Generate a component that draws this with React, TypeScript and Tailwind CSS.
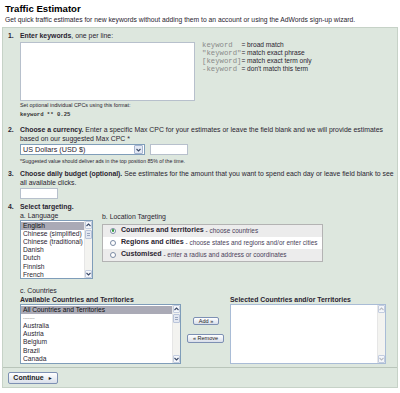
import React from "react";

const Chevron = ({ up, disabled }: { up?: boolean; disabled?: boolean }) => (
  <svg width="5" height="4" viewBox="0 0 5 4" className="block">
    <path
      d={up ? "M0.5 3 L2.5 1 L4.5 3" : "M0.5 1 L2.5 3 L4.5 1"}
      fill="none"
      stroke={disabled ? "#b8bcc4" : "#3b4a68"}
      strokeWidth="1.1"
    />
  </svg>
);

const ScrollBar = ({ disabled, thumb = true }: { disabled?: boolean; thumb?: boolean }) => (
  <div className="flex flex-col w-[8px] h-full bg-[#f3f3f0] border-l border-[#e6e6e6]">
    <div className="h-[8px] flex items-center justify-center bg-[#f5f7fb] border border-[#c3cde0] rounded-[1px]">
      <Chevron up disabled={disabled} />
    </div>
    {thumb && !disabled && (
      <div className="h-[9px] mt-px bg-[#e4e8f1] border border-[#b9c4da] rounded-[1px] flex flex-col items-center justify-center gap-[1px]">
        <div className="w-[3px] h-px bg-[#9aa6bf]" />
        <div className="w-[3px] h-px bg-[#9aa6bf]" />
      </div>
    )}
    <div className="flex-1" />
    <div className="h-[8px] flex items-center justify-center bg-[#f5f7fb] border border-[#c3cde0] rounded-[1px]">
      <Chevron disabled={disabled} />
    </div>
  </div>
);

const Num = ({ n }: { n: string }) => (
  <div className="w-[12px] shrink-0 font-bold">{n}</div>
);

const Btn = ({ children, className = "" }: { children: React.ReactNode; className?: string }) => (
  <div
    className={
      "flex items-center justify-center border border-[#7d90b3] rounded-[2px] bg-gradient-to-b from-white to-[#d9dfea] text-[#222] " +
      className
    }
  >
    {children}
  </div>
);

export default function App() {
  const languages = [
    "English",
    "Chinese (simplified)",
    "Chinese (traditional)",
    "Danish",
    "Dutch",
    "Finnish",
    "French",
  ];
  const countries = [
    "All Countries and Territories",
    "-------",
    "Australia",
    "Austria",
    "Belgium",
    "Brazil",
    "Canada",
  ];
  const mono = "font-['Liberation_Mono',monospace]";
  return (
    <div className="w-[400px] h-[393px] bg-white font-['Liberation_Sans',Arial,sans-serif] text-[#2a2430] overflow-hidden">
      <div className="pl-[5px] pt-[3px]">
        <div className="text-[9.6px] font-bold leading-[11px] text-black">Traffic Estimator</div>
        <div className="text-[6.75px] leading-[9px] mt-[1px]">
          Get quick traffic estimates for new keywords without adding them to an account or using the AdWords sign-up wizard.
        </div>
      </div>

      <div className="mx-[2px] mt-[3px] border border-[#c6d2c7] bg-[#dde7de] text-[6.9px] leading-[9.5px]">
        {/* Section 1 */}
        <div className="flex pl-[5px] pt-[3px]">
          <Num n="1." />
          <div className="flex flex-col">
            <div>
              <span className="font-bold">Enter keywords</span>, one per line:
            </div>
            <div className="flex mt-[1px]">
              <div className="w-[175px] h-[59px] bg-white border border-[#b7c0cc]" />
              <div className="ml-[7px] mt-[-1px] text-[6.6px] leading-[8.3px] whitespace-pre">
                <div><span className={mono + " text-[#8a8a8a] text-[7.3px]"}>keyword  </span>= broad match</div>
                <div><span className={mono + " text-[#8a8a8a] text-[7.3px]"}>"keyword"</span>= match exact phrase</div>
                <div><span className={mono + " text-[#8a8a8a] text-[7.3px]"}>[keyword]</span>= match exact term only</div>
                <div><span className={mono + " text-[#8a8a8a] text-[7.3px]"}>-keyword </span>= don't match this term</div>
              </div>
            </div>
            <div className="text-[5.4px] leading-[7px] mt-[1.5px]">Set optional individual CPCs using this format:</div>
            <div className={mono + " text-[5.6px] leading-[7px] mt-[1.5px] font-bold text-[#333] whitespace-pre"}>keyword ** 0.25</div>
          </div>
        </div>

        {/* Section 2 */}
        <div className="flex pl-[5px] pt-[7px] pr-[6px]">
          <Num n="2." />
          <div className="flex flex-col flex-1">
            <div>
              <span className="font-bold">Choose a currency.</span> Enter a specific Max CPC for your estimates or leave the field blank and we will provide estimates based on our suggested Max CPC *
            </div>
            <div className="flex mt-[0.5px] gap-[5px]">
              <div className="w-[125px] h-[11px] bg-white border border-[#7f9db9] flex items-center">
                <div className="flex-1 pl-[2px] text-[7.2px] leading-[9px]">US Dollars (USD $)</div>
                <div className="w-[9px] h-[9px] mr-[1px] flex items-center justify-center bg-[#e3e9f5] border border-[#a6b5d0] rounded-[1px]">
                  <Chevron />
                </div>
              </div>
              <div className="w-[38px] h-[11px] bg-white border border-[#b7c0cc]" />
            </div>
            <div className="text-[5.2px] leading-[7px] mt-[2.5px]">
              *Suggested value should deliver ads in the top position 85% of the time.
            </div>
          </div>
        </div>

        {/* Section 3 */}
        <div className="flex pl-[5px] pt-[4px] pr-0">
          <Num n="3." />
          <div className="flex flex-col flex-1">
            <div className="text-[6.85px]">
              <span className="font-bold">Choose daily budget (optional).</span> See estimates for the amount that you want to spend each day or leave field blank to see all available clicks.
            </div>
            <div className="w-[38px] h-[11px] bg-white border border-[#b7c0cc]" />
          </div>
        </div>

        {/* Section 4 */}
        <div className="flex pl-[5px] pt-[3.5px] pb-[3.5px]">
          <Num n="4." />
          <div className="flex flex-col">
            <div className="font-bold leading-[9.5px]">Select targeting.</div>
            <div className="flex">
              <div className="flex flex-col w-[73px]">
                <div className="leading-[8px]">a. Language</div>
                <div className="h-[59px] bg-white border border-[#7f9db9] flex">
                  <div className="flex-1 flex flex-col pt-[1px] overflow-hidden">
                    {languages.map((l, i) => (
                      <div
                        key={l}
                        className={
                          "pl-[2px] text-[6.7px] leading-[8.2px] whitespace-nowrap " +
                          (i === 0 ? "bg-[#aaaab6] text-[#111]" : "")
                        }
                      >
                        {l}
                      </div>
                    ))}
                  </div>
                  <ScrollBar />
                </div>
              </div>
              <div className="flex flex-col ml-[9px] pt-[1px]">
                <div className="leading-[8px]">b. Location Targeting</div>
                <div className="mt-[3px] w-[221px] border border-[#b3b3b3] flex flex-col">
                  {[
                    ["Countries and territories", " - choose countries"],
                    ["Regions and cities", " - choose states and regions and/or enter cities"],
                    ["Customised", " - enter a radius and address or coordinates"],
                  ].map(([b, r], i) => (
                    <div
                      key={b}
                      className={
                        "h-[12px] flex items-center pl-[7px] whitespace-nowrap overflow-hidden " +
                        (i === 1 ? "bg-white" : "bg-[#ececec]")
                      }
                    >
                      <div className="shrink-0 w-[6px] h-[6px] rounded-full border border-[#7a8aa3] bg-white flex items-center justify-center mr-[5px]">
                        {i === 0 && <div className="w-[2.5px] h-[2.5px] rounded-full bg-[#2f9a3a]" />}
                      </div>
                      <span className="font-bold text-[7.1px]">{b}</span>
                      <span className="text-[6.45px] text-[#4a3f5a] whitespace-pre">{r}</span>
                    </div>
                  ))}
                </div>
              </div>
            </div>

            <div className="leading-[8px] mt-[8px]">c. Countries</div>
            <div className="flex">
              <div className="flex flex-col">
                <div className="font-bold leading-[9px]">Available Countries and Territories</div>
                <div className="w-[161px] h-[60px] bg-white border border-[#7f9db9] flex">
                  <div className="flex-1 flex flex-col pt-[1px] overflow-hidden">
                    {countries.map((c, i) => (
                      <div
                        key={c}
                        className={
                          "pl-[2px] leading-[8.2px] whitespace-nowrap " +
                          (i === 0 ? "bg-[#aaaab6] text-[#111] text-[6.7px]" : "") +
                          (i === 1 ? " text-[#777] text-[5px]" : " text-[6.7px]")
                        }
                      >
                        {c}
                      </div>
                    ))}
                  </div>
                  <ScrollBar />
                </div>
              </div>
              <div className="w-[49px] flex flex-col items-center pt-[22px] gap-[9px]">
                <Btn className="w-[26px] h-[8px] text-[5.5px] leading-[6px] ml-[1px]">Add &raquo;</Btn>
                <Btn className="w-[37px] h-[9px] text-[5.5px] leading-[6px]">&laquo; Remove</Btn>
              </div>
              <div className="flex flex-col">
                <div className="font-bold leading-[9px]">Selected Countries and/or Territories</div>
                <div className="w-[156px] h-[60px] bg-white border border-[#a9bcd6] flex">
                  <div className="flex-1" />
                  <ScrollBar disabled />
                </div>
              </div>
            </div>
          </div>
        </div>

        {/* Footer */}
        <div className="border-t border-[#b9c5ba] pl-[5px] pt-[3.5px] pb-[3px]">
          <Btn className="w-[50px] h-[12px] font-bold text-[7px] leading-[8px] gap-[4px]">
            <span>Continue</span>
            <span className="text-[5px]">&#9658;</span>
          </Btn>
        </div>
      </div>
    </div>
  );
}
